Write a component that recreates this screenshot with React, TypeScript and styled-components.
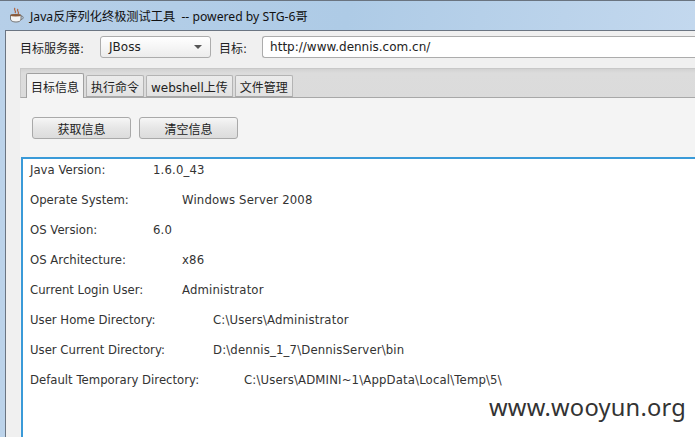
import React from "react";
import styled, { createGlobalStyle } from "styled-components";

const Global = createGlobalStyle`
  html, body { margin: 0; padding: 0; background: #f0f0f0; }
  * { box-sizing: border-box; }
`;

const UI_FONT = `"DejaVu Sans", "Noto Sans CJK SC", sans-serif`;

const Window = styled.div`
  position: relative;
  width: 695px;
  height: 437px;
  overflow: hidden;
  display: flex;
  flex-direction: column;
  background: linear-gradient(90deg, #bcd3ea 0%, #c6daef 100%);
  border-top: 1px solid #6a7480;
`;

const TitleBar = styled.div`
  height: 29px;
  display: flex;
  align-items: center;
  gap: 5px;
  padding-left: 8px;
  background: linear-gradient(100deg, #b6cfe8 0%, #aecbe6 50%, #c3d8ee 100%);
  font-family: "Noto Sans", "Noto Sans CJK SC", sans-serif;
  font-size: 12.2px;
  color: #111;
  white-space: pre;
`;

const Client = styled.div`
  flex: 1;
  margin-left: 5px;
  border-left: 1px solid #6b7582;
  border-top: 1px solid #6b7582;
  background: #f0f0f0;
  display: flex;
  flex-direction: column;
  font-family: ${UI_FONT};
  font-size: 12px;
  color: #222;
  min-height: 0;
`;

const TopRow = styled.div`
  display: flex;
  align-items: center;
  padding: 5px 0 0 14px;
  height: 27px;
`;

const Label = styled.span<{ $gap: number }>`
  margin-right: ${(p) => p.$gap}px;
`;

const Combo = styled.div`
  width: 111px;
  height: 22px;
  border: 1px solid #acacac;
  border-radius: 3px;
  background: linear-gradient(#ffffff, #ececec);
  display: flex;
  align-items: center;
  justify-content: space-between;
  padding: 0 8px 0 8px;
  margin-right: 8px;
`;

const Arrow = styled.span`
  width: 0;
  height: 0;
  border-left: 4px solid transparent;
  border-right: 4px solid transparent;
  border-top: 4px solid #555;
`;

const TextField = styled.div`
  flex: 1;
  height: 22px;
  border: 1px solid #acacac;
  border-right: none;
  border-radius: 3px 0 0 3px;
  background: #fff;
  display: flex;
  align-items: center;
  padding-left: 7px;
`;

const TabPane = styled.div`
  flex: 1;
  margin: 10px 0 0 14px;
  display: flex;
  flex-direction: column;
  min-height: 0;
`;

const TabHeader = styled.div`
  height: 30px;
  background: linear-gradient(#d2d2d2, #dcdcdc 15%, #dbdbdb);
  border-top: 1px solid #c8c8c8;
  border-left: 1px solid #c8c8c8;
  display: flex;
  align-items: flex-end;
  gap: 2px;
  padding-left: 5px;
  border-bottom: 1px solid #a8a8a8;
`;

const Tab = styled.div<{ $active?: boolean }>`
  height: ${(p) => (p.$active ? 25 : 22)}px;
  margin-bottom: ${(p) => (p.$active ? -1 : 0)}px;
  padding: 0 4px;
  display: flex;
  align-items: center;
  border: 1px solid ${(p) => (p.$active ? "#a0a0a0" : "#b4b4b4")};
  border-bottom: ${(p) => (p.$active ? "none" : "1px solid #a8a8a8")};
  border-radius: 2px 2px 0 0;
  background: ${(p) =>
    p.$active ? "#f4f4f4" : "linear-gradient(#ececec, #e2e2e2)"};
  color: #222;
`;

const TabContent = styled.div`
  flex: 1;
  background: #f4f4f4;
  display: flex;
  flex-direction: column;
  padding-left: 1px;
  min-height: 0;
`;

const ButtonRow = styled.div`
  display: flex;
  gap: 8px;
  padding: 19px 0 0 11px;
`;

const Button = styled.div`
  width: 99px;
  height: 22px;
  border: 1px solid #a9a9a9;
  border-radius: 3px;
  background: linear-gradient(#f6f6f6, #e6e6e6 50%, #dcdcdc);
  display: flex;
  align-items: center;
  justify-content: center;
  color: #222;
`;

const InfoArea = styled.div`
  flex: 1;
  margin-top: 18px;
  background: #fff;
  border-left: 2px solid #3a9ad8;
  border-top: 2px solid #3a9ad8;
  display: flex;
  flex-direction: column;
  gap: 8px;
  padding: 0 0 0 7px;
  font-family: "DejaVu Sans", sans-serif;
  font-size: 11.7px;
  color: #333;
`;

const InfoRow = styled.div`
  display: flex;
  line-height: 22px;
  white-space: pre;
`;

const InfoKey = styled.span<{ $w: number }>`
  width: ${(p) => p.$w}px;
  flex-shrink: 0;
`;

const InfoValue = styled.span`
  letter-spacing: 0.15px;
`;

const Watermark = styled.div`
  position: absolute;
  left: 489px;
  top: 390px;
  font-family: "Noto Sans", sans-serif;
  font-size: 23.7px;
  color: #333;
  letter-spacing: 0.2px;
`;

const JavaIcon = () => (
  <svg width="17" height="17" viewBox="0 0 17 17">
    <path d="M7 1 C5 3 9 4 7 6 M10 2 C8 4 12 5 10 7" stroke="#b0603a" strokeWidth="1.2" fill="none" />
    <path d="M2.5 8 H13 V12 C13 14 11 15 8 15 C5 15 2.5 14 2.5 12 Z" fill="#f5f5f5" stroke="#777" strokeWidth="1" />
    <path d="M13 9 C16 9 16 12 13 12.5" stroke="#777" strokeWidth="1" fill="none" />
    <ellipse cx="7.7" cy="8.2" rx="5.2" ry="1.2" fill="#8a5a3a" />
  </svg>
);

const rows: [string, string, number][] = [
  ["Java Version:", "1.6.0_43", 123],
  ["Operate System:", "Windows Server 2008", 152],
  ["OS Version:", "6.0", 123],
  ["OS Architecture:", "x86", 152],
  ["Current Login User:", "Administrator", 152],
  ["User Home Directory:", "C:\\Users\\Administrator", 183],
  ["User Current Directory:", "D:\\dennis_1_7\\DennisServer\\bin", 183],
  ["Default Temporary Directory:", "C:\\Users\\ADMINI~1\\AppData\\Local\\Temp\\5\\", 214],
];

export default function App() {
  return (
    <Window>
      <Global />
      <TitleBar>
        <JavaIcon />
        <span>Java反序列化终极测试工具  -- powered by STG-6哥</span>
      </TitleBar>
      <Client>
        <TopRow>
          <Label $gap={16}>目标服务器:</Label>
          <Combo>
            <span>JBoss</span>
            <Arrow />
          </Combo>
          <Label $gap={15}>目标:</Label>
          <TextField>http://www.dennis.com.cn/</TextField>
        </TopRow>
        <TabPane>
          <TabHeader>
            <Tab $active>目标信息</Tab>
            <Tab>执行命令</Tab>
            <Tab>webshell上传</Tab>
            <Tab>文件管理</Tab>
          </TabHeader>
          <TabContent>
            <ButtonRow>
              <Button>获取信息</Button>
              <Button>清空信息</Button>
            </ButtonRow>
            <InfoArea>
              {rows.map(([k, v, w]) => (
                <InfoRow key={k}>
                  <InfoKey $w={w}>{k}</InfoKey>
                  <InfoValue>{v}</InfoValue>
                </InfoRow>
              ))}
            </InfoArea>
          </TabContent>
        </TabPane>
      </Client>
      <Watermark>www.wooyun.org</Watermark>
    </Window>
  );
}
